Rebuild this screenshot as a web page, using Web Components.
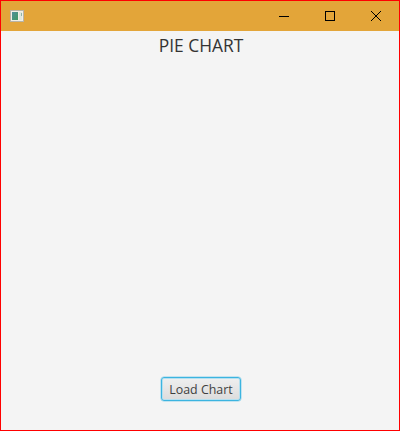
<!DOCTYPE html>
<html>
<head>
<meta charset="utf-8">
<title>Pie Chart</title>
<style>
    html, body { margin: 0; height: 100%; }
    body { font-family: "Open Sans", sans-serif; }
</style>
</head>
<body>
<app-window>
    <chart-panel heading="PIE CHART">
        <load-button>Load Chart</load-button>
    </chart-panel>
</app-window>

<script>
class AppWindow extends HTMLElement {
    constructor() {
        super();
        this.attachShadow({ mode: "open" });
        this.shadowRoot.innerHTML = `
            <style>
                :host {
                    display: flex;
                    flex-direction: column;
                    box-sizing: border-box;
                    width: 400px;
                    height: 431px;
                    border: 1px solid #ff0000;
                    background: #f4f4f4;
                }
                .titlebar {
                    display: flex;
                    align-items: center;
                    height: 30px;
                    flex: none;
                    background: #e3a539;
                }
                .app-icon {
                    margin-left: 9px;
                    margin-right: auto;
                    width: 15px;
                    height: 13px;
                }
                button {
                    display: flex;
                    align-items: center;
                    justify-content: center;
                    width: 46px;
                    height: 30px;
                    padding: 0;
                    border: 0;
                    background: none;
                }
                svg { display: block; }
            </style>
            <div class="titlebar">
                <svg class="app-icon" viewBox="0 0 15 13">
                    <defs>
                        <linearGradient id="screen" x1="0" y1="0" x2="1" y2="1">
                            <stop offset="0" stop-color="#4f8f9c"/>
                            <stop offset="1" stop-color="#3f9a63"/>
                        </linearGradient>
                    </defs>
                    <rect x="0" y="0" width="14" height="12" fill="#f1efe6"/>
                    <rect x="0.5" y="0.5" width="13" height="11" fill="none" stroke="#b9b4a5"/>
                    <rect x="2" y="2" width="6" height="8" fill="url(#screen)"/>
                    <rect x="9" y="2" width="3" height="8" fill="#dfe6dc"/>
                    <rect x="11" y="3" width="1" height="3" fill="#8fb5a8"/>
                </svg>
                <button aria-label="Minimize">
                    <svg width="10" height="10" viewBox="0 0 10 10"><path d="M0 5.5H10" stroke="#000" fill="none"/></svg>
                </button>
                <button aria-label="Maximize">
                    <svg width="10" height="10" viewBox="0 0 10 10"><rect x="0.5" y="0.5" width="9" height="9" stroke="#000" fill="none"/></svg>
                </button>
                <button aria-label="Close">
                    <svg width="10" height="10" viewBox="0 0 10 10"><path d="M0 0L10 10M10 0L0 10" stroke="#000" fill="none"/></svg>
                </button>
            </div>
            <slot></slot>
        `;
    }
}

class ChartPanel extends HTMLElement {
    constructor() {
        super();
        this.attachShadow({ mode: "open" });
        this.shadowRoot.innerHTML = `
            <style>
                :host {
                    display: flex;
                    flex-direction: column;
                    align-items: center;
                    flex: 1;
                    min-height: 0;
                    padding-left: 2px;
                }
                h1 {
                    margin: 3px 0 0;
                    font: 400 17.4px/22px "Open Sans", sans-serif;
                    color: #333;
                }
                .chart { flex: 1; }
                .actions {
                    display: flex;
                    justify-content: center;
                    padding-bottom: 29px;
                }
            </style>
            <h1></h1>
            <div class="chart"></div>
            <div class="actions"><slot></slot></div>
        `;
    }

    connectedCallback() {
        this.shadowRoot.querySelector("h1").textContent = this.getAttribute("heading");
    }
}

class LoadButton extends HTMLElement {
    constructor() {
        super();
        this.attachShadow({ mode: "open" });
        this.shadowRoot.innerHTML = `
            <style>
                :host {
                    display: flex;
                    align-items: center;
                    justify-content: center;
                    box-sizing: border-box;
                    width: 80px;
                    height: 24px;
                    border: 1px solid #3cb4e0;
                    box-shadow: 0 0 0 0.5px #8fd2ea, inset 0 0 0 1px #b4e0f0;
                    border-radius: 3px;
                    background: linear-gradient(#efefef, #dcdcdc);
                    font: 400 12.4px "Open Sans", sans-serif;
                    color: #3f3f3f;
                }
            </style>
            <slot></slot>
        `;
    }
}

customElements.define("app-window", AppWindow);
customElements.define("chart-panel", ChartPanel);
customElements.define("load-button", LoadButton);
</script>
</body>
</html>
